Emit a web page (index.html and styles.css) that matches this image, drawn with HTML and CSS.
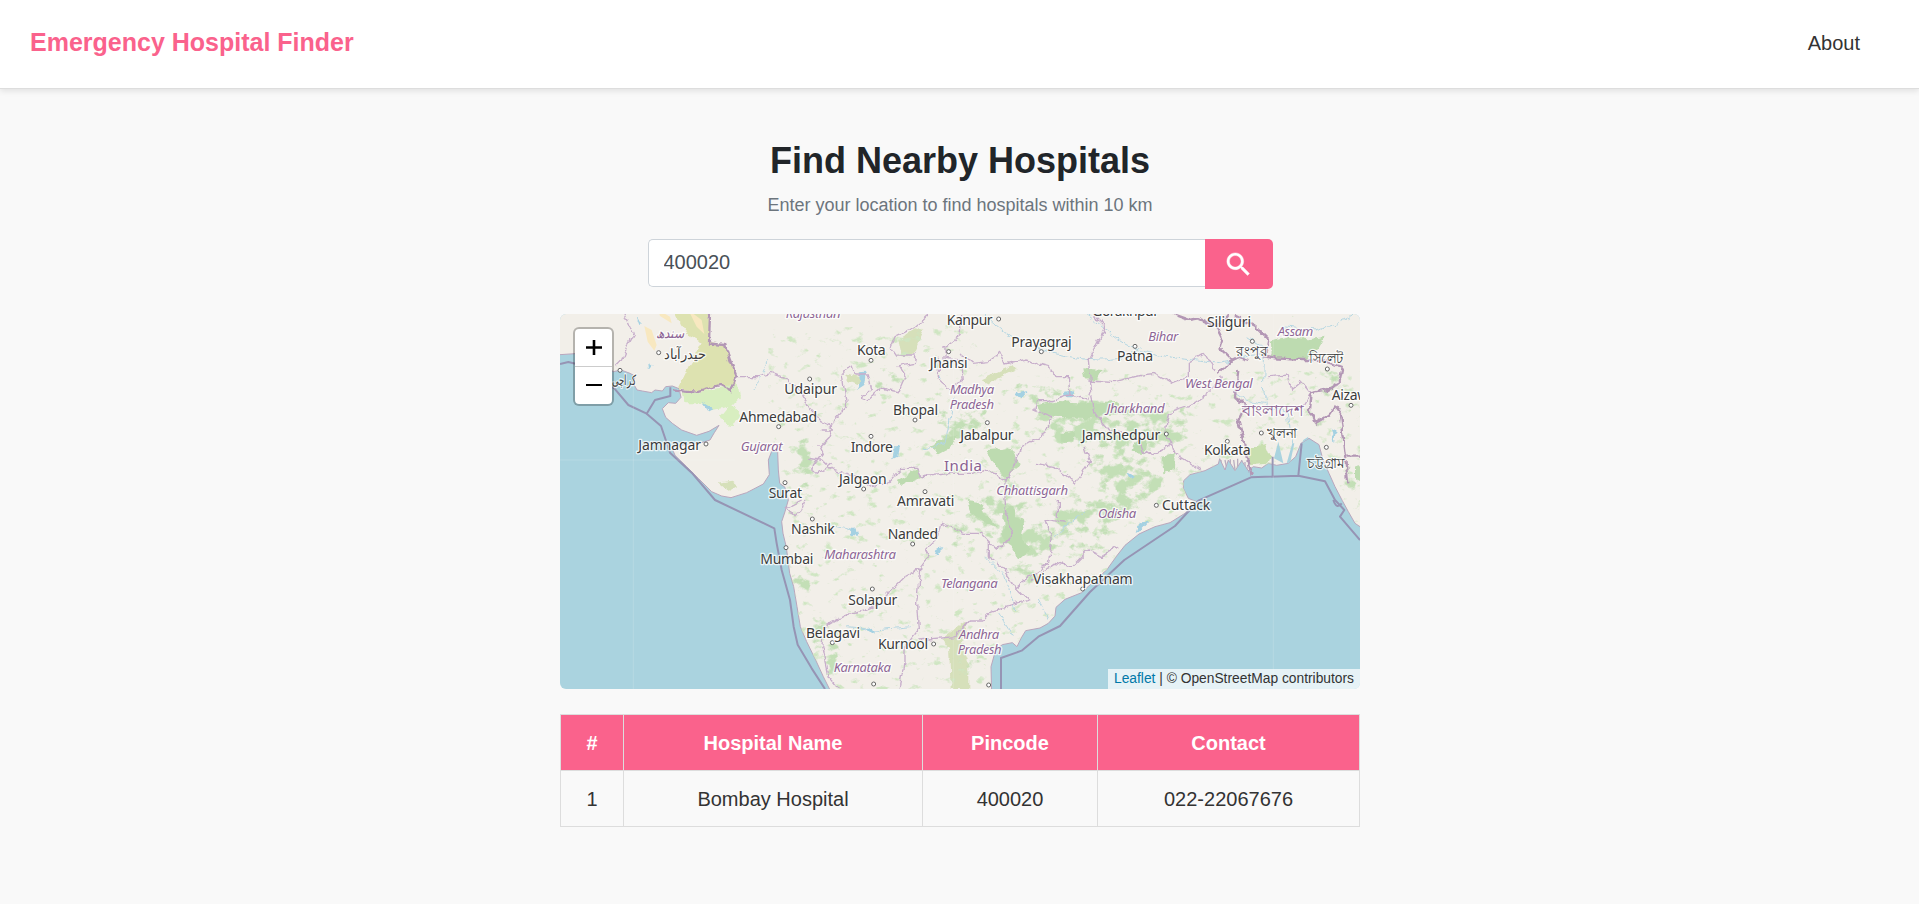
FILE: index.html
```html
<!DOCTYPE html>
<html lang="en">
<head>
<meta charset="utf-8">
<title>Emergency Hospital Finder</title>
<link rel="stylesheet" href="styles.css">
</head>
<body>
<header class="navbar">
  <a class="brand">Emergency Hospital Finder</a>
  <nav><a class="nav-link">About</a></nav>
</header>
<main class="container">
  <h1 class="title">Find Nearby Hospitals</h1>
  <p class="subtitle">Enter your location to find hospitals within 10 km</p>
  <form class="search">
    <input class="search-input" type="text" value="400020" aria-label="Location">
    <button class="search-btn" type="button" aria-label="Search">
      <svg viewBox="0 0 24 24" width="31" height="31"><path fill="#fff" stroke="#fff" stroke-width=".3" d="M15.5 14h-.79l-.28-.27C15.41 12.59 16 11.11 16 9.5 16 5.91 13.09 3 9.5 3S3 5.91 3 9.5 5.91 16 9.5 16c1.61 0 3.09-.59 4.23-1.57l.27.28v.79l5 4.99L20.49 19l-4.99-5zm-6 0C7.01 14 5 11.99 5 9.5S7.01 5 9.5 5 14 7.01 14 9.5 11.99 14 9.5 14z"/></svg>
    </button>
  </form>
  <section class="map">
    <svg class="map-canvas" viewBox="15 12 2400 1125" preserveAspectRatio="none">
      <defs>
        <filter id="rough" x="-5%" y="-5%" width="110%" height="110%">
          <feTurbulence type="fractalNoise" baseFrequency="0.035" numOctaves="3" seed="4" result="n"/>
          <feDisplacementMap in="SourceGraphic" in2="n" scale="22" xChannelSelector="R" yChannelSelector="G"/>
        </filter>
        <filter id="forest" filterUnits="userSpaceOnUse" x="15" y="12" width="2400" height="1125">
          <feGaussianBlur in="SourceGraphic" stdDeviation="22" result="b"/>
          <feTurbulence type="fractalNoise" baseFrequency="0.022 0.03" numOctaves="5" seed="9" result="n"/>
          <feColorMatrix in="n" type="matrix" values="0 0 0 0 0  0 0 0 0 0  0 0 0 0 0  1 0 0 0 0" result="na"/>
          <feComposite in="b" in2="na" operator="arithmetic" k2="1" k3="2.2" k4="-1.6" result="mix"/>
          <feComponentTransfer in="mix" result="cut"><feFuncA type="linear" slope="3" intercept="-1"/></feComponentTransfer>
          <feFlood flood-color="#c3dfb6"/>
          <feComposite in2="cut" operator="in"/>
        </filter>
        <filter id="speckle" filterUnits="userSpaceOnUse" x="15" y="12" width="2400" height="1125" color-interpolation-filters="sRGB">
          <feTurbulence type="fractalNoise" baseFrequency="0.03 0.04" numOctaves="4" seed="22" result="n"/>
          <feColorMatrix in="n" type="matrix" values="0 0 0 0 .81  0 0 0 0 .9  0 0 0 0 .76  0 6 0 0 -3.75" result="s"/>
          <feComposite in="s" in2="SourceAlpha" operator="in"/>
        </filter>
        <clipPath id="landclip"><use href="#land"/></clipPath>
      </defs>
      <rect x="15" y="12" width="2400" height="1125" fill="#aad3df"/>
      <path id="land" fill="#f2efe9" stroke="#b9a6bd" stroke-width="3" d="M0 0V135L60 131 100 150 150 168 175 185 198 180 225 190 240 198 236 222 246 240 262 243 290 248 300 240 322 243 332 230 352 228 372 236 378 262 362 280 340 278 322 296 332 322 352 340 380 360 425 376 462 364 492 346 478 368 465 390 440 398 400 402 350 412 360 436 395 470 430 505 470 545 500 558 528 563 575 548 625 522 643 494 640 450 650 424 668 426 670 480 674 520 690 532 700 570 690 605 680 635 684 670 694 712 704 790 716 830 726 890 736 950 755 995 782 1050 805 1100 830 1150H1310L1308 1070 1322 1020 1342 1004 1372 998 1386 1010 1398 985 1412 962 1455 954 1480 940 1500 918 1503 892 1530 868 1580 848 1615 815 1655 780 1685 738 1710 706 1752 672 1800 650 1845 638 1890 610 1925 575 1900 565 1885 535 1886 512 1905 494 1950 482 1990 462 1994 446 2010 480 2020 450 2040 482 2060 452 2080 482 2095 470 2120 474 2140 460 2165 466 2200 460 2222 440 2238 400 2262 385 2292 404 2304 450 2322 490 2340 530 2362 572 2380 605 2400 640 2430 660V0Z"/>
      <g clip-path="url(#landclip)">
        <path fill="#dde2b0" filter="url(#rough)" d="M355 0 372 40 400 75 440 95 425 130 400 170 368 235 420 242 450 245 495 222 520 240 542 220 538 180 510 105 465 95 460 0Z"/>
        <path fill="#f8e8c0" d="M400 0 440 30 448 72 425 50ZM268 48 290 60 305 105 298 122 278 95ZM310 0 345 20 350 40 315 18Z"/>
        <path fill="#d8eec0" filter="url(#rough)" d="M380 240 430 248 500 232 548 218 555 262 535 285 558 320 530 345 505 340 495 320 520 290 470 300 440 280 385 280Z"/>
        <path fill="#d6e0ba" filter="url(#rough)" d="M1030 90 1080 55 1108 62 1080 130 1040 138ZM1280 208 1375 165 1385 178 1300 218ZM1155 990 1230 935 1240 965 1218 1000 1240 1060 1240 1137 1190 1137 1185 1010ZM870 190 925 205 915 225 880 210ZM490 518 530 512 552 530 525 545Z"/>
        <path fill="#000" filter="url(#speckle)" d="M640 60 1240 40 1300 200 2415 180V1137H700V560L640 400Z"/>
        <g filter="url(#forest)">
          <path d="M1430 270 1640 260 1900 290 1890 420 1650 430 1440 400ZM1300 400 1400 420 1400 560 1480 680 1440 850 1380 800 1340 700 1210 610 1240 560 1330 540ZM1100 400 1220 360 1160 430ZM1010 490 1110 470 1060 530ZM680 690 740 760 800 850 740 870 820 960 870 1137 820 1137 740 960ZM1500 560 1760 580 1650 720 1500 700 1450 830 1380 780ZM1600 420 1900 460 1800 600 1640 620ZM720 340 790 440 800 530 740 560 700 420ZM840 190 780 270 735 240ZM1100 50 1160 200 1110 210ZM1150 310 1300 270 1280 400 1150 400ZM1350 220 1500 190 1520 250 1350 280ZM1130 620 1240 640 1300 780 1200 700ZM1000 160 1050 200 1000 260 930 200Z"/>
          <path d="M1600 180 1650 180 1640 220 1600 210ZM2270 180 2380 190 2370 270 2300 260ZM2370 480 2415 450V570L2370 560ZM740 600 720 620 770 690 690 660ZM1920 130 1980 130 1960 190 1920 190ZM1220 1000 1280 1060 1200 1120Z"/>
        </g>
        <g fill="#bddbb0" filter="url(#rough)">
          <path d="M2148 95 2200 80 2260 88 2312 80 2290 120 2250 150 2150 145Z"/>
          <path d="M1445 285 1500 275 1600 282 1690 275 1700 310 1600 325 1500 320 1460 310Z"/>
          <path d="M1120 408 1170 388 1205 378 1195 405 1150 430ZM1025 510 1085 478 1100 500 1040 525ZM1298 420 1370 415 1395 465 1350 500 1310 450ZM1345 600 1375 590 1380 620 1410 630 1400 680 1425 720 1390 750 1370 710 1345 690ZM1585 175 1640 180 1625 208 1590 205ZM1735 400 1775 385 1770 430 1730 425ZM1520 370 1560 365 1555 395 1520 395ZM1820 440 1862 430 1860 480 1825 490ZM2400 470 2420 465V520L2400 510ZM1235 570 1270 575 1290 610 1330 650 1290 640 1250 610Z"/>
        </g>
        <path fill="#c9dfaf" filter="url(#rough)" d="M2082 415 2130 402 2145 440 2135 462 2085 465Z"/>
        <g class="rivers" filter="url(#rough)">
          <path d="M1590 12C1660 60 1700 110 1790 130S1930 150 1970 160 2100 110 2130 140M1290 12C1350 80 1420 110 1500 130S1700 170 1760 110M2128 150 2125 240 2135 290 2200 310 2210 400M2075 80 2120 110 2128 150M2180 50 2280 60 2350 40 2400 12M2040 250 2070 270 2130 280M1380 900 1350 800 1290 740M1450 870 1480 930M1330 910 1375 980M880 950 960 960 1070 950M1200 260 1170 400 1110 420M640 150 600 240M1590 600 1500 680M820 640 900 660"/>
        </g>
        <g fill="#a4d1e2" filter="url(#rough)">
          <path d="M912 190 932 188 928 225 905 240 915 215ZM1020 410 1035 405 1030 440 1015 448ZM885 658 905 655 910 680 890 678ZM1145 715 1165 712 1155 730 1140 730ZM1380 250 1420 240 1400 265ZM1530 245 1560 240 1550 262 1532 262ZM935 955 950 950 960 970ZM1150 190 1158 210 1152 205ZM1720 490 1740 500 1730 508ZM1752 640 1780 638 1755 665 1742 668ZM242 20 262 40 250 42ZM280 160 290 168 282 178ZM440 275 475 298 460 305ZM2330 350 2345 365 2340 400Z"/>
        </g>
        <path fill="none" stroke="#b9aec0" stroke-width="4" d="M1998 450v30m12-30 6 30m10-32v32m10-30 4 30m8-34v36m12-32 2 32m8-26v28"/>
        <path fill="#aad3df" d="M2157 445 2170 395 2185 460ZM2195 460 2212 400 2218 400 2205 462ZM2225 440 2245 390 2260 380 2245 440Z"/>
      </g>
      <g class="state-borders" filter="url(#rough)">
        <path d="M210 12 235 75 215 110 200 150 178 172M540 200 610 200 650 190 700 210 735 240 760 290 800 335 835 350 820 385 795 410 805 430 770 480 790 490 830 460M1122 12 1080 50 1020 80 1008 110 1025 135 1080 135 1075 160 1030 170 1050 200 1030 245 980 235 940 270 920 262 950 240 940 195 900 195 895 165 860 180 875 290 830 340 835 360 800 360M1220 12 1215 80 1170 110 1170 145 1220 150 1225 215 1180 235 1150 210 1150 140M1215 130 1250 160 1300 155 1335 130 1350 165 1410 150 1480 170 1500 200 1540 200 1545 255 1480 275 1445 275 1440 300 1490 320 1470 370 1400 410 1370 480 1350 510 1300 480 1250 490 1190 490 1100 500 1085 475 1040 475 1000 520 950 530 900 500 830 480 800 450 760 445"/>
        <path d="M1545 255 1600 270 1610 245 1600 150 1650 50 1610 12M1600 210 1680 215 1760 195 1800 190 1850 220 1900 200 1900 160 1950 130 1980 180M1610 260 1620 310 1660 360 1740 370 1760 420 1790 440 1850 400 1860 430 1940 480M1850 400 1830 370 1840 310 1900 290 1960 250 2000 200M1350 510 1350 570 1360 640 1375 670 1330 720 1300 690 1280 670 1230 670 1160 640 1150 680 1110 720 1120 740 1095 770 1085 880 1090 960 1050 1010 1050 1060 1035 1137M1095 775 1050 800 1000 850 985 880 930 900 880 910 810 950 800 1010M1300 690 1300 740 1340 770 1380 830 1420 870 1350 890 1310 900 1280 930 1240 930 1200 980 1090 990M1380 830 1480 760 1490 690 1470 630 1530 640M1510 570 1510 620M1430 810 1500 760 1550 770 1600 720 1640 740 1690 710M1440 460 1500 470 1560 520 1605 450 1590 410M2140 200 2200 195 2210 240 2240 215 2270 250 2240 300M800 1010 820 1100 850 1137M695 590 720 620 740 600 750 570M700 590 740 570"/>
      </g>
      <g class="country-borders" filter="url(#rough)">
        <path d="M465 12 462 100 510 105 525 150 545 200 525 240 495 225 425 245 350 238"/>
        <path d="M1850 12 1900 30 1930 25 1985 50 2000 80 1990 110 2030 150 1990 190M1990 50 2020 12M2020 155 2050 140 2080 150M2050 180 2040 260 2070 290 2050 330 2070 400 2090 498M2100 50 2140 90 2130 140 2160 145 2240 150 2300 150 2360 170 2350 220 2320 240 2270 250 2265 300 2285 340 2320 320 2340 290 2355 310 2370 440 2380 520M2370 440 2415 440M2100 50 2040 20"/>
      </g>
      <g class="sea-borders">
        <path d="M15 162 40 156 80 166 178 235 220 285 275 311 300 270 346 258V232"/>
        <path d="M275 311 318 348 345 428 410 488 480 570 658 655 665 700 680 780 705 870 716 950 728 1004 770 1075 810 1137M1338 1137V1044L1400 1022 1450 980 1515 948 1605 846 1708 750 1860 648 1930 572 2088 502 2230 497 2310 514 2340 570 2368 600 2355 620 2385 655 2415 690M2153 440V497M2240 400 2230 497"/>
        <path d="M2335 570q10 30 25 10"/>
      </g>
      <path class="tile-seams" d="M235 190V1137M15 450H540M1195 12V1137M2155 12V1137"/>
      <g class="dots">
        <circle cx="311" cy="128" r="6"/><circle cx="195" cy="181" r="6"/><circle cx="764" cy="207" r="6"/><circle cx="671" cy="350" r="6"/><circle cx="453" cy="402" r="6"/><circle cx="690" cy="518" r="6"/><circle cx="948" cy="151" r="6"/><circle cx="1331" cy="27" r="6"/><circle cx="1181" cy="125" r="6"/><circle cx="1459" cy="125" r="6"/><circle cx="1080" cy="330" r="6"/><circle cx="1297" cy="338" r="6"/><circle cx="948" cy="379" r="6"/><circle cx="926" cy="537" r="6"/><circle cx="1110" cy="545" r="6"/><circle cx="1740" cy="109" r="6"/><circle cx="2092" cy="94" r="6"/><circle cx="2317" cy="177" r="6"/><circle cx="2388" cy="286" r="6"/><circle cx="1834" cy="372" r="6"/><circle cx="2017" cy="394" r="6"/><circle cx="2119" cy="369" r="6"/><circle cx="2314" cy="412" r="6"/><circle cx="772" cy="627" r="6"/><circle cx="693" cy="713" r="6"/><circle cx="1073" cy="702" r="6"/><circle cx="952" cy="837" r="6"/><circle cx="1136" cy="1002" r="6"/><circle cx="832" cy="998" r="6"/><circle cx="956" cy="1122" r="6"/><circle cx="1301" cy="1125" r="6"/><circle cx="1583" cy="837" r="6"/><circle cx="1804" cy="586" r="6"/>
      </g>
      <g class="city">
        <text x="328" y="146" textLength="125" lengthAdjust="spacingAndGlyphs">حيدرآباد</text>
        <text x="170" y="225" textLength="73" lengthAdjust="spacingAndGlyphs">كراچی</text>
        <text x="688" y="252" textLength="158">Udaipur</text>
        <text x="553" y="337" textLength="233">Ahmedabad</text>
        <text x="250" y="420" textLength="188">Jamnagar</text>
        <text x="641" y="564" textLength="100">Surat</text>
        <text x="1175" y="44" textLength="138">Kanpur</text>
        <text x="906" y="135" textLength="86">Kota</text>
        <text x="1124" y="175" textLength="114">Jhansi</text>
        <text x="1369" y="110" textLength="181">Prayagraj</text>
        <text x="1014" y="314" textLength="135">Bhopal</text>
        <text x="1216" y="390" textLength="160">Jabalpur</text>
        <text x="887" y="426" textLength="127">Indore</text>
        <text x="852" y="521" textLength="143">Jalgaon</text>
        <text x="1026" y="587" textLength="172">Amravati</text>
        <text x="1612" y="18" textLength="200">Gorakhpur</text>
        <text x="1956" y="50" textLength="132">Siliguri</text>
        <text x="1686" y="152" textLength="108">Patna</text>
        <text x="1580" y="389" textLength="236">Jamshedpur</text>
        <text x="1947" y="435" textLength="140">Kolkata</text>
        <text x="2044" y="137" textLength="94" lengthAdjust="spacingAndGlyphs">রংপুর</text>
        <text x="2262" y="160" textLength="104" lengthAdjust="spacingAndGlyphs">সিলেট</text>
        <text x="2137" y="384" textLength="90" lengthAdjust="spacingAndGlyphs">খুলনা</text>
        <text x="2256" y="474" textLength="114" lengthAdjust="spacingAndGlyphs">চট্টগ্রাম</text>
        <text x="2330" y="269" textLength="120">Aizawl</text>
        <text x="708" y="671" textLength="131">Nashik</text>
        <text x="616" y="761" textLength="159">Mumbai</text>
        <text x="998" y="688" textLength="151">Nanded</text>
        <text x="880" y="885" textLength="147">Solapur</text>
        <text x="753" y="985" textLength="162">Belagavi</text>
        <text x="969" y="1017" textLength="150">Kurnool</text>
        <text x="1434" y="822" textLength="299">Visakhapatnam</text>
        <text x="1821" y="601" textLength="145">Cuttack</text>
      </g>
      <g class="state">
        <text x="302" y="83" textLength="86" lengthAdjust="spacingAndGlyphs">سندھ</text>
        <text x="692" y="24" textLength="165">Rajasthan</text>
        <text x="557" y="424" textLength="126">Gujarat</text>
        <text x="1184" y="252" textLength="134">Madhya</text>
        <text x="1184" y="297" textLength="133">Pradesh</text>
        <text x="1324" y="555" textLength="215">Chhattisgarh</text>
        <text x="1780" y="94" textLength="90">Bihar</text>
        <text x="2168" y="79" textLength="107">Assam</text>
        <text x="1890" y="234" textLength="203">West Bengal</text>
        <text x="1655" y="308" textLength="174">Jharkhand</text>
        <text x="808" y="747" textLength="215">Maharashtra</text>
        <text x="1158" y="834" textLength="170">Telangana</text>
        <text x="1212" y="986" textLength="121">Andhra</text>
        <text x="1208" y="1031" textLength="132">Pradesh</text>
        <text x="836" y="1085" textLength="172">Karnataka</text>
        <text x="1629" y="625" textLength="115">Odisha</text>
      </g>
      <g class="country">
        <text x="1167" y="484" textLength="114">India</text>
        <text x="2062" y="319" textLength="184" lengthAdjust="spacingAndGlyphs">বাংলাদেশ</text>
      </g>
    </svg>
    <div class="zoom-control">
      <a class="zoom-in"><svg viewBox="0 0 16 16" width="16" height="16"><path d="M0 7.5h16M8 0v15" stroke="#000" stroke-width="2.6"/></svg></a>
      <a class="zoom-out"><svg viewBox="0 0 16 16" width="16" height="16"><path d="M0 7h16" stroke="#000" stroke-width="2.2"/></svg></a>
    </div>
    <div class="attribution"><a>Leaflet</a> | © OpenStreetMap contributors</div>
  </section>
  <table class="results">
    <colgroup><col class="c-num"><col class="c-name"><col class="c-pin"><col class="c-tel"></colgroup>
    <thead><tr><th>#</th><th>Hospital Name</th><th>Pincode</th><th>Contact</th></tr></thead>
    <tbody><tr><td>1</td><td>Bombay Hospital</td><td>400020</td><td>022-22067676</td></tr></tbody>
  </table>
</main>
</body>
</html>
```

FILE: styles.css
```css
* { box-sizing: border-box; }
body {
  margin: 0;
  background: #f9f9f9;
  color: #333;
  font: 20px/30px "Liberation Sans", Arial, sans-serif;
  overflow: hidden;
}
.navbar {
  display: flex;
  justify-content: space-between;
  align-items: center;
  height: 89px;
  padding: 0 59px 4px 30px;
  background: #fff;
  border-bottom: 1px solid #ddd;
  box-shadow: 0 2px 6px rgba(0, 0, 0, .1);
}
.brand { color: #fa628c; font-size: 25px; font-weight: bold; }
.navbar nav { padding-top: 2px; }
.nav-link { color: #333; }
.container { width: 800px; margin: 0 auto; padding-top: 50px; position: relative; left: .5px; }
.title {
  margin: 0 0 10px;
  color: #212529;
  font-size: 36px;
  line-height: 43px;
  text-align: center;
}
.subtitle {
  margin: 0 0 20px;
  color: #6c757d;
  font-size: 18px;
  line-height: 27px;
  text-align: center;
}
.search { display: flex; align-items: flex-start; width: 625px; margin: 0 auto 25px; }
.search-input {
  flex: 1;
  height: 48px;
  padding: 0 15px 2px;
  border: 1px solid #ced4da;
  border-right: 0;
  border-radius: 5px 0 0 5px;
  background: #fff;
  color: #495057;
  font: 20px "Liberation Sans", Arial, sans-serif;
}
.search-btn {
  display: flex;
  align-items: center;
  justify-content: center;
  width: 68px;
  height: 50px;
  padding: 0;
  border: 0;
  border-radius: 0 5px 5px 0;
  background: #fa628c;
}
.map { position: relative; height: 375px; border-radius: 6px; overflow: hidden; }
.map-canvas { display: block; width: 800px; height: 375px; font-family: "Noto Sans", "Open Sans", sans-serif; }
.rivers path { fill: none; stroke: #b4d6e2; stroke-width: 3; }
.state-borders path { fill: none; stroke: #c7aecb; stroke-width: 4; }
.country-borders path { fill: none; stroke: #b397b5; stroke-width: 7; }
.sea-borders path { fill: none; stroke: #9694b4; stroke-width: 6; stroke-linejoin: round; }
.tile-seams { fill: none; stroke: #fff; stroke-width: 2; opacity: .22; }
.dots circle { fill: #fff; stroke: #666; stroke-width: 3; }
.map-canvas text { paint-order: stroke; stroke: rgba(255, 255, 255, .75); stroke-width: 8; stroke-linejoin: round; }
.city { font-size: 42px; fill: #3c3c3c; }
.state { font-size: 39.5px; font-style: italic; fill: #8d6595; }
.country { font-size: 45px; fill: #8a6191; }
.zoom-control {
  position: absolute;
  top: 13px;
  left: 13px;
  width: 41px;
  height: 79px;
  border: 2px solid rgba(0, 0, 0, .25);
  border-radius: 6px;
  background: #fff;
  background-clip: padding-box;
  display: flex;
  flex-direction: column;
}
.zoom-control a { flex: 1; display: flex; align-items: center; justify-content: center; }
.zoom-in { border-bottom: 1px solid #ccc; }
.attribution {
  position: absolute;
  right: 0;
  bottom: 0;
  height: 20px;
  padding: 0 6px;
  background: rgba(255, 255, 255, .7);
  font-size: 13.8px;
  line-height: 20px;
}
.attribution a { color: #0078a8; }
.results { width: 800px; margin-top: 25px; border-collapse: collapse; table-layout: fixed; }
.results th, .results td { height: 56px; padding: 0; border: 1px solid #ddd; text-align: center; }
.results th { background: #fa628c; color: #fff; }
.c-num { width: 63px; }
.c-name { width: 299px; }
.c-pin { width: 175px; }
```
